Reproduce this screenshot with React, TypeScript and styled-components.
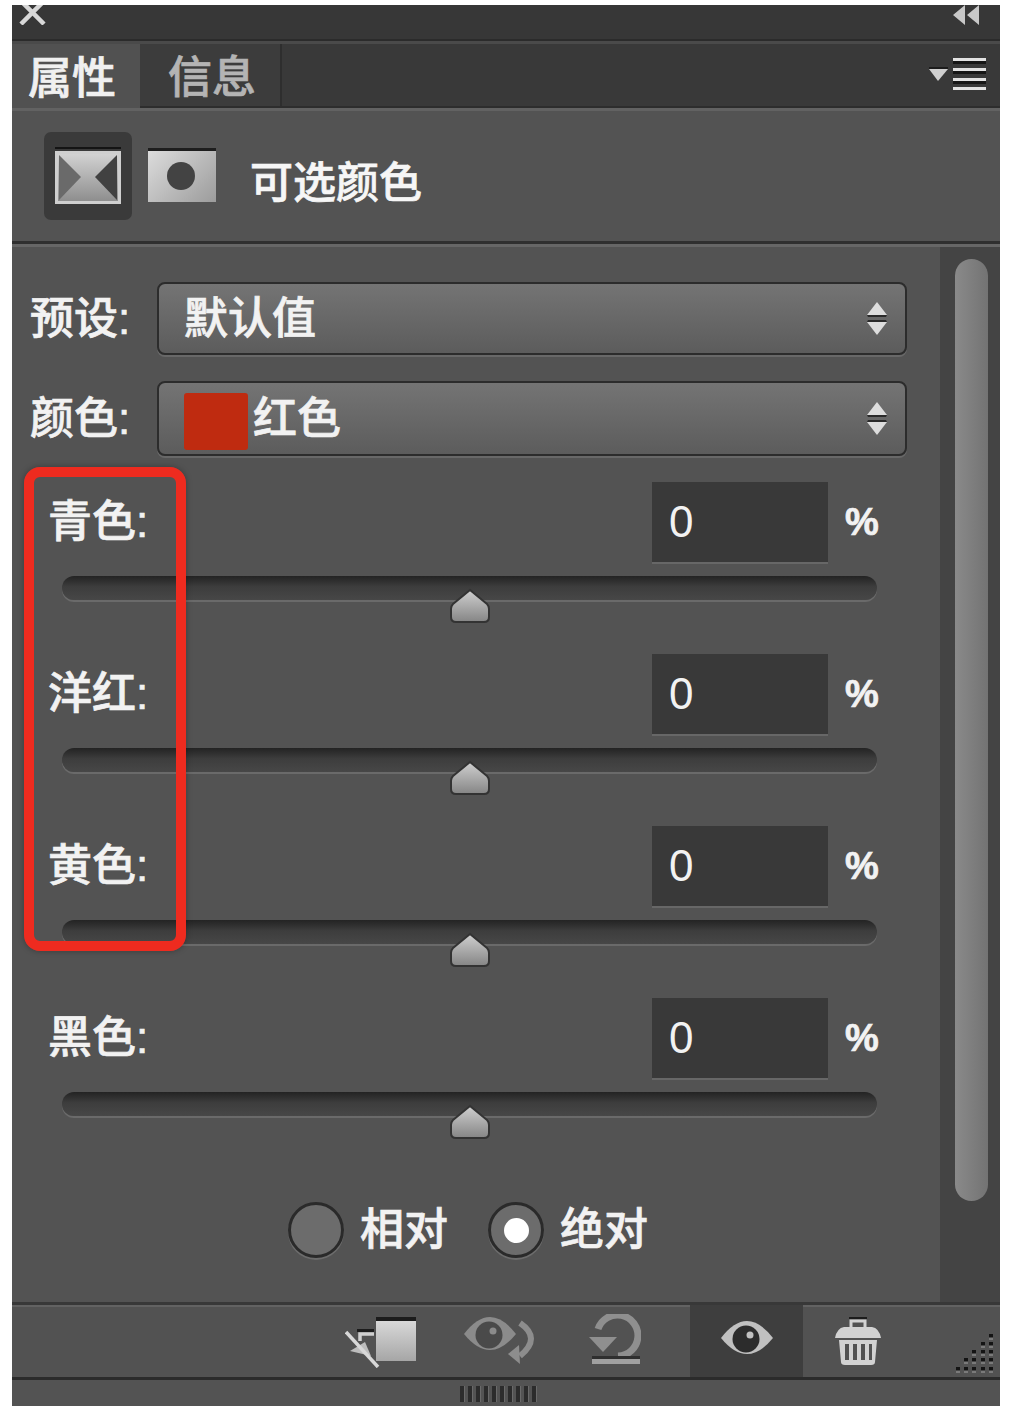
import React from 'react';
import styled, { createGlobalStyle } from 'styled-components';

const GlobalStyle = createGlobalStyle`
  html, body {
    margin:0;
    padding:0;
    background:#fff;
  }
`;

const Panel = styled.div`
  width:988px;
  height:1401px;
  margin:5px 0 0 12px;
  display:flex;
  flex-direction:column;
  overflow:hidden;
  background:#535353;
  color:#f2f2f2;
  font-family:"Liberation Sans","Noto Sans CJK SC",sans-serif;
  font-size:44px;
  font-weight:500;
  line-height:1;
  -webkit-text-stroke:0.7px currentColor;
`;

const TitleBar = styled.div`
  flex:none;
  height:34px;
  display:flex;
  justify-content:space-between;
  padding:0 20px 0 6px;
  background:#373737;
  border-bottom:2px solid #2b2b2b;
`;

const TabBar = styled.div`
  flex:none;
  height:67px;
  display:flex;
  align-items:stretch;
  background:#393939;
  border-top:3px solid #4a4a4a;
  border-bottom:2px solid #2d2d2d;
  box-sizing:border-box;
`;

const Tab = styled.div<{ $active?: boolean }>`
  display:flex;
  align-items:center;
  box-sizing:border-box;
  width:${p => (p.$active ? '128px' : '142px')};
  padding-left:${p => (p.$active ? '16px' : '28px')};
  padding-top:6px;
  margin-bottom:${p => (p.$active ? '-2px' : '0')};
  background:${p => (p.$active ? '#515151' : '#3c3c3c')};
  color:${p => (p.$active ? '#f0f0f0' : '#b4b4b4')};
  border-right:${p => (p.$active ? 'none' : '2px solid #2e2e2e')};
`;

const MenuButton = styled.div`
  margin-left:auto;
  margin-right:14px;
  display:flex;
  align-items:center;
`;

const Header = styled.div`
  flex:none;
  height:136px;
  box-sizing:border-box;
  display:flex;
  align-items:center;
  padding-left:32px;
  background:#535353;
  border-top:3px solid #626262;
  border-bottom:3px solid #2f2f2f;
  color:#f6f6f6;
  font-size:43px;
`;

const ThumbBox = styled.div`
  width:88px;
  height:88px;
  border-radius:7px;
  background:#3a3a3a;
  display:flex;
  align-items:center;
  justify-content:center;
`;

const MaskThumb = styled.div`
  width:68px;
  height:54px;
  margin:-2px 0 0 16px;
  box-sizing:border-box;
  border-top:3px solid #1e1e1e;
  background:linear-gradient(135deg,#dcdcdc,#9c9c9c);
  display:flex;
  align-items:center;
  justify-content:center;
  padding-right:2px;
`;

const MaskDot = styled.div`
  width:28px;
  height:28px;
  border-radius:50%;
  background:#434343;
  margin-top:-2px;
`;

const HeaderTitle = styled.span`
  margin-left:34px;
  margin-top:14px;
`;

const Body = styled.div`
  flex:none;
  height:1058px;
  box-sizing:border-box;
  display:flex;
  position:relative;
  border-top:3px solid #666;
`;

const Main = styled.div`
  flex:1;
  padding-top:35px;
`;

const ScrollColumn = styled.div`
  flex:none;
  width:60px;
  box-sizing:border-box;
  padding:12px 12px 0 15px;
  background:#444;
`;

const ScrollThumb = styled.div`
  height:942px;
  border-radius:17px;
  background:linear-gradient(90deg,#8a8a8a,#737373);
`;

const SelectRow = styled.div`
  display:flex;
  align-items:center;
  padding:0 33px 0 18px;
  margin-bottom:26px;
`;

const RowLabel = styled.span`
  flex:none;
  width:127px;
`;

const Select = styled.div<{ $tall?: boolean }>`
  flex:1;
  height:${p => (p.$tall ? '75px' : '73px')};
  box-sizing:border-box;
  display:flex;
  align-items:center;
  padding:0 16px 0 25px;
  border:2px solid #2c2c2c;
  border-radius:8px;
  background:linear-gradient(180deg,#747474,#5c5c5c);
  box-shadow:0 2px 0 #686868;
`;

const Swatch = styled.div`
  width:64px;
  height:57px;
  margin:6px 5px 0 0;
  border-radius:3px;
  background:#bf2b10;
`;

const SelectText = styled.span`
  flex:1;
`;

const SliderBlock = styled.div`
  height:172px;
`;

const SliderTop = styled.div`
  height:80px;
  display:flex;
  align-items:center;
  padding-left:36px;
`;

const ValueBox = styled.div`
  margin-left:auto;
  width:176px;
  height:80px;
  box-sizing:border-box;
  display:flex;
  align-items:center;
  padding-left:17px;
  background:#393939;
  box-shadow:0 2px 0 #676767;
  font-weight:400;
  -webkit-text-stroke:0;
`;

const Percent = styled.span`
  width:95px;
  padding-left:17px;
  font-size:38px;
  font-weight:700;
`;

const Track = styled.div`
  position:relative;
  height:24px;
  margin:14px 63px 0 50px;
  box-sizing:border-box;
  border-radius:12px;
  background:linear-gradient(180deg,#232323,#3d3d3d 45%,#474747);
  box-shadow:0 2px 0 #6a6a6a;
`;

const Thumb = styled.svg`
  position:absolute;
  left:50%;
  top:12px;
  margin-left:-21px;
`;

const RadioRow = styled.div`
  height:56px;
  margin-top:32px;
  padding-left:276px;
  display:flex;
  align-items:center;
`;

const Radio = styled.div<{ $checked?: boolean }>`
  flex:none;
  width:56px;
  height:56px;
  box-sizing:border-box;
  border-radius:50%;
  border:3px solid #2a2a2a;
  background:#6c6c6c;
  box-shadow:0 2px 0 #6c6c6c;
  display:flex;
  align-items:center;
  justify-content:center;
  &::after {
    content:'';
    display:${p => (p.$checked ? 'block' : 'none')};
    width:25px;
    height:25px;
    border-radius:50%;
    background:#fff;
  }
`;

const RadioLabel = styled.span`
  margin:0 40px 0 16px;
`;

const Callout = styled.div`
  position:absolute;
  left:12px;
  top:220px;
  width:162px;
  height:484px;
  box-sizing:border-box;
  border:10px solid #ee2b1f;
  border-radius:16px;
  box-shadow:0 0 6px rgba(0,0,0,.3);
  pointer-events:none;
`;

const Footer = styled.div`
  flex:none;
  height:78px;
  box-sizing:border-box;
  display:flex;
  align-items:center;
  padding-left:333px;
  background:#525252;
  border-top:3px solid #383838;
  border-bottom:3px solid #2b2b2b;
  box-shadow:inset 0 2px 0 #626262;
`;

const FooterIcon = styled.svg<{ $gap?: number }>`
  flex:none;
  margin-left:${p => p.$gap ?? 0}px;
`;

const ActiveCell = styled.div`
  flex:none;
  align-self:stretch;
  width:113px;
  margin-left:49px;
  background:#3e3e3e;
  display:flex;
  align-items:center;
  justify-content:center;
`;

const Grip = styled.svg`
  flex:none;
  margin-left:auto;
  margin-right:5px;
  align-self:flex-end;
  margin-bottom:4px;
`;

const BottomStrip = styled.div`
  flex:1;
  background:#535353;
  padding:6px 0 0 448px;
`;

const StripGrip = styled.div`
  width:77px;
  height:16px;
  background:repeating-linear-gradient(90deg,#2c2c2c 0 4px,#6a6a6a 4px 5px,#535353 5px 8px);
`;

function Updown() {
  return (
    <svg width="24" height="36" viewBox="0 0 24 36">
      <path d="M12 1 22 14H2Z" fill="#ddd" />
      <path d="M2 14H22L21 16H3Z" fill="#2a2a2a" />
      <path d="M2 21H22L12 34Z" fill="#ddd" />
      <path d="M3 19H21L22 21H2Z" fill="#2a2a2a" />
    </svg>
  );
}

function EyeShape({ cx, cy, color, pupil }: { cx: number; cy: number; color: string; pupil: string }) {
  return (
    <g>
      <path d={`M${cx - 26} ${cy}Q${cx} ${cy - 34} ${cx + 26} ${cy}Q${cx} ${cy + 32} ${cx - 26} ${cy}Z`} fill={color} />
      <circle cx={cx - 1} cy={cy + 1} r="13.5" fill={pupil} />
      <circle cx={cx + 3} cy={cy - 3} r="3.5" fill={color} />
    </g>
  );
}

const gripColumns = [1, 9, 17, 26, 34];
const gripRows = [1, 9, 17, 25, 34];

const sliders = ['青色:', '洋红:', '黄色:', '黑色:'];

export default function App() {
  return (
    <>
      <GlobalStyle />
      <Panel>
        <TitleBar>
          <svg width="30" height="20" viewBox="0 0 30 20">
            <path d="M3-4 26 19M26-4 3 19" stroke="#d8d8d8" strokeWidth="4.5" fill="none" />
          </svg>
          <svg width="28" height="22" viewBox="0 0 28 22">
            <path d="M13 0V20L1 10ZM27 0V20L15 10Z" fill="#c8c8c8" />
          </svg>
        </TitleBar>
        <TabBar>
          <Tab $active>属性</Tab>
          <Tab>信息</Tab>
          <MenuButton>
            <svg width="58" height="36" viewBox="0 0 58 36">
              <path d="M1 12H20L10 24Z" fill="#d0d0d0" />
              <path d="M1 10H20V12H1Z" fill="#1c1c1c" />
              <path d="M25 1H58V4H25ZM25 11H58V14H25ZM25 21H58V24H25ZM25 30H58V33H25Z" fill="#e2e2e2" />
              <path d="M25 4H58V7H25ZM25 14H58V17H25ZM25 24H58V27H25Z" fill="#161616" />
            </svg>
          </MenuButton>
        </TabBar>
        <Header>
          <ThumbBox>
            <svg width="66" height="58" viewBox="0 0 66 58">
              <defs>
                <linearGradient id="adj" x1="0" y1="0" x2="0" y2="1">
                  <stop offset="0" stopColor="#d4d4d4" />
                  <stop offset="1" stopColor="#8c8c8c" />
                </linearGradient>
              </defs>
              <path d="M0 0H66V2H0Z" fill="#141414" />
              <rect x="1.5" y="5.5" width="63" height="50" fill="url(#adj)" stroke="#cfcfcf" strokeWidth="3" />
              <path d="M4 8 26 30 4 53Z" fill="#6a6a6a" />
              <path d="M62 8 40 30 62 53Z" fill="#414141" />
            </svg>
          </ThumbBox>
          <MaskThumb>
            <MaskDot />
          </MaskThumb>
          <HeaderTitle>可选颜色</HeaderTitle>
        </Header>
        <Body>
          <Main>
            <SelectRow>
              <RowLabel>预设:</RowLabel>
              <Select>
                <SelectText>默认值</SelectText>
                <Updown />
              </Select>
            </SelectRow>
            <SelectRow>
              <RowLabel>颜色:</RowLabel>
              <Select $tall>
                <Swatch />
                <SelectText>红色</SelectText>
                <Updown />
              </Select>
            </SelectRow>
            {sliders.map(label => (
              <SliderBlock key={label}>
                <SliderTop>
                  <span>{label}</span>
                  <ValueBox>0</ValueBox>
                  <Percent>%</Percent>
                </SliderTop>
                <Track>
                  <Thumb width="42" height="36" viewBox="0 0 42 36">
                    <defs>
                      <linearGradient id={`thumb-${label}`} x1="0" y1="0" x2="0" y2="1">
                        <stop offset="0" stopColor="#d0d0d0" />
                        <stop offset="1" stopColor="#858585" />
                      </linearGradient>
                    </defs>
                    <path
                      d="M21 2 38 16Q40 18 40 21V29Q40 34 35 34H7Q2 34 2 29V21Q2 18 4 16Z"
                      fill={`url(#thumb-${label})`}
                      stroke="#333"
                      strokeWidth="2"
                    />
                  </Thumb>
                </Track>
              </SliderBlock>
            ))}
            <RadioRow>
              <Radio />
              <RadioLabel>相对</RadioLabel>
              <Radio $checked />
              <RadioLabel>绝对</RadioLabel>
            </RadioRow>
          </Main>
          <ScrollColumn>
            <ScrollThumb />
          </ScrollColumn>
          <Callout />
        </Body>
        <Footer>
          <FooterIcon width="72" height="54" viewBox="0 0 72 54">
            <defs>
              <linearGradient id="clip" x1="0" y1="0" x2="0" y2="1">
                <stop offset="0" stopColor="#d8d8d8" />
                <stop offset="1" stopColor="#a6a6a6" />
              </linearGradient>
            </defs>
            <path d="M31 3H71V7H31Z" fill="#1c1c1c" />
            <rect x="31" y="7" width="40" height="40" fill="url(#clip)" />
            <path d="M12 15H29V18H12Z" fill="#1c1c1c" />
            <path d="M15 27V20H29" stroke="#cfcfcf" strokeWidth="3.5" fill="none" />
            <path d="M5 37 20 28 26 42Z" fill="#bdbdbd" />
            <path d="M1 18 33 53" stroke="#d8d8d8" strokeWidth="3.5" fill="none" />
          </FooterIcon>
          <FooterIcon $gap={45} width="76" height="54" viewBox="0 0 76 54">
            <EyeShape cx={28} cy={20} color="#8b8b8b" pupil="#4a4a4a" />
            <path d="M58 9Q80 24 58 42" stroke="#8d8d8d" strokeWidth="6" fill="none" />
            <path d="M46 40 57 31 58 50Z" fill="#8d8d8d" />
          </FooterIcon>
          <FooterIcon $gap={51} width="52" height="54" viewBox="0 0 52 54">
            <path d="M9 15A20.5 20.5 0 1 1 29 42" stroke="#8f8f8f" strokeWidth="7" fill="none" />
            <path d="M0 23H28L14 38Z" fill="#8f8f8f" />
            <path d="M3 42H51V45H3Z" fill="#2f2f2f" />
            <path d="M3 45H51V50H3Z" fill="#a0a0a0" />
          </FooterIcon>
          <ActiveCell>
            <svg width="54" height="44" viewBox="0 0 54 44">
              <path d="M5 16Q27 -8 49 16Q27 0 5 16Z" fill="#1d1d1d" />
              <EyeShape cx={27} cy={19} color="#c0c0c0" pupil="#2c2c2c" />
            </svg>
          </ActiveCell>
          <FooterIcon $gap={32} width="46" height="50" viewBox="0 0 46 50">
            <path d="M14 1H32V3H14Z" fill="#1c1c1c" />
            <path d="M16 12V5H30V12" stroke="#d2d2d2" strokeWidth="3" fill="none" />
            <path d="M0 22Q2 12 9 11H37Q44 12 46 22Z" fill="#d2d2d2" />
            <path
              d="M4 24H42L40 46Q40 49 36 49H10Q6 49 6 46ZM10 28V44H14V28ZM18 28V44H22V28ZM26 28V44H30V28ZM34 28V44H37V28Z"
              fill="#d2d2d2"
              fillRule="evenodd"
            />
          </FooterIcon>
          <Grip width="40" height="40" viewBox="0 0 40 40">
            {gripRows.map((y, row) =>
              gripColumns.slice(4 - row).map(x => (
                <g key={`${x}-${y}`}>
                  <rect x={x} y={y + 3} width="4" height="3" fill="#7a7a7a" />
                  <rect x={x} y={y} width="4" height="3.5" fill="#141414" />
                </g>
              ))
            )}
          </Grip>
        </Footer>
        <BottomStrip>
          <StripGrip />
        </BottomStrip>
      </Panel>
    </>
  );
}
